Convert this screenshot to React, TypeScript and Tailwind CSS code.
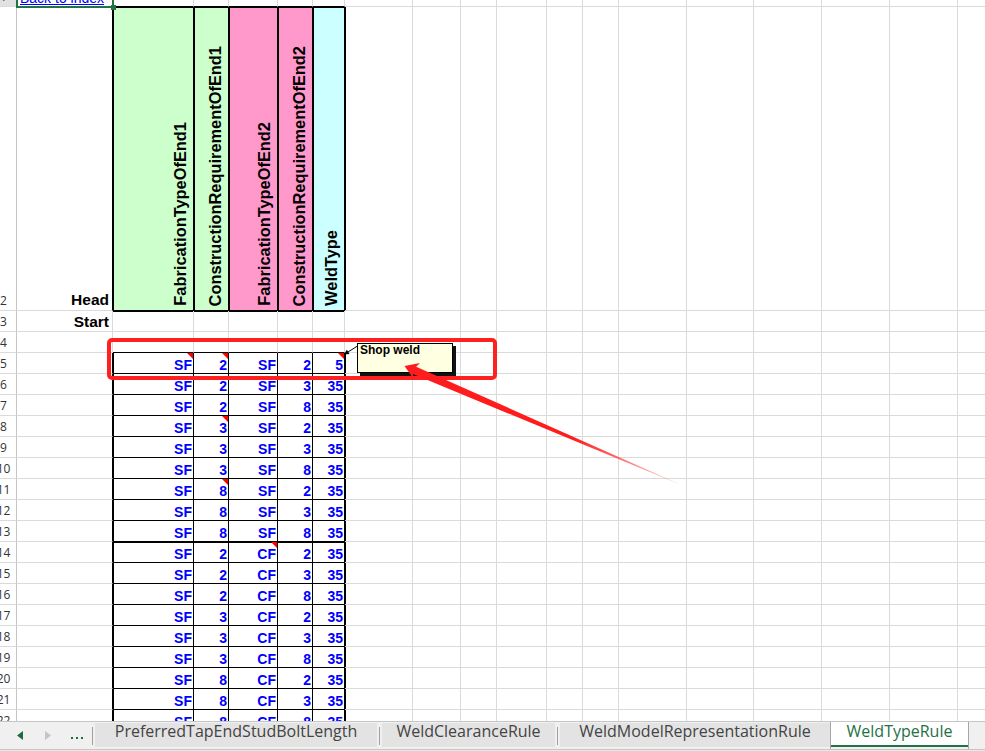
import React from 'react';

const W = [
  'w-[96px]', 'w-[81px]', 'w-[35px]', 'w-[49px]', 'w-[35px]', 'w-[32px]',
  'w-[68px]', 'w-[48px]', 'w-[36px]', 'w-[50px]', 'w-[36px]', 'w-[36px]',
  'w-[68px]', 'w-[67px]', 'w-[68px]', 'w-[68px]', 'w-[68px]', 'w-[68px]',
];

const DATA: Record<number, string[]> = {
  5: ['SF', '2', 'SF', '2', '5'],
  6: ['SF', '2', 'SF', '3', '35'],
  7: ['SF', '2', 'SF', '8', '35'],
  8: ['SF', '3', 'SF', '2', '35'],
  9: ['SF', '3', 'SF', '3', '35'],
  10: ['SF', '3', 'SF', '8', '35'],
  11: ['SF', '8', 'SF', '2', '35'],
  12: ['SF', '8', 'SF', '3', '35'],
  13: ['SF', '8', 'SF', '8', '35'],
  14: ['SF', '2', 'CF', '2', '35'],
  15: ['SF', '2', 'CF', '3', '35'],
  16: ['SF', '2', 'CF', '8', '35'],
  17: ['SF', '3', 'CF', '2', '35'],
  18: ['SF', '3', 'CF', '3', '35'],
  19: ['SF', '3', 'CF', '8', '35'],
  20: ['SF', '8', 'CF', '2', '35'],
  21: ['SF', '8', 'CF', '3', '35'],
  22: ['SF', '8', 'CF', '8', '35'],
};

const NOTES = new Set(['5-1', '5-2', '5-5', '8-2', '11-2', '14-3']);

const HEADERS = [
  'FabricationTypeOfEnd1',
  'ConstructionRequirementOfEnd1',
  'FabricationTypeOfEnd2',
  'ConstructionRequirementOfEnd2',
  'WeldType',
];

const HEADER_BG = ['', 'bg-[#ccffcc]', 'bg-[#ccffcc]', 'bg-[#ff99cc]', 'bg-[#ff99cc]', 'bg-[#ccffff]'];

function borderClasses(r: number, c: number) {
  const inTbl = c >= 1 && c <= 5;
  const isData = r >= 5 && r <= 22;
  const rBlack = (r === 2 || isData) && c <= 5;
  const bBlack = inTbl && (r === 1 || r === 2 || r === 4 || isData);
  const lExtra = (r === 2 && c >= 1 && c <= 6) || (isData && (c === 1 || c === 6));
  const tExtra = inTbl && (r === 2 || r === 3 || r === 14);
  const R = rBlack ? 'border-r-black' : 'border-r-[#dadada]';
  const B = bBlack ? 'border-b-black' : 'border-b-[#dadada]';
  const S =
    lExtra && tExtra
      ? 'shadow-[inset_1px_0_0_#000,inset_0_1px_0_#000]'
      : lExtra
      ? 'shadow-[inset_1px_0_0_#000]'
      : tExtra
      ? 'shadow-[inset_0_1px_0_#000]'
      : '';
  return `border-r border-b ${R} ${B} ${S}`;
}

function Cell({ r, c }: { r: number; c: number }) {
  const base = `relative shrink-0 h-full ${W[c]} ${borderClasses(r, c)}`;
  const note = NOTES.has(`${r}-${c}`) ? (
    <span className="absolute top-0 right-0 w-0 h-0 border-l-[6px] border-t-[6px] border-l-transparent border-t-[#ff0000]" />
  ) : null;

  if (r === 1 && c === 0) {
    return (
      <div className={`${base} overflow-hidden`}>
        <span className="block pl-[3px] -mt-[9px] text-[14px] leading-none text-[#0000ff] underline whitespace-nowrap">
          Back to index
        </span>
      </div>
    );
  }
  if ((r === 2 || r === 3) && c === 0) {
    return (
      <div className={`${base} flex items-end justify-end pr-[3px] ${r === 2 ? 'pb-[3px]' : 'pb-[2px]'}`}>
        <span className="text-[15.5px] leading-none font-bold text-black whitespace-nowrap">
          {r === 2 ? 'Head' : 'Start'}
        </span>
      </div>
    );
  }
  if (r === 2 && c >= 1 && c <= 5) {
    return (
      <div className={`${base} ${HEADER_BG[c]} flex items-end justify-end pr-[5px] pb-[4px]`}>
        <span className="[writing-mode:vertical-rl] rotate-180 whitespace-nowrap text-[16.4px] leading-none font-bold text-black">
          {HEADERS[c - 1]}
        </span>
      </div>
    );
  }
  if (DATA[r] && c >= 1 && c <= 5) {
    return (
      <div className={`${base} flex items-end justify-end pr-[1px] pb-[1px]`}>
        <span className="text-[14px] leading-none font-bold text-[#0000ff]">{DATA[r][c - 1]}</span>
        {note}
      </div>
    );
  }
  return <div className={base} />;
}

function RowHeader({ r }: { r: number }) {
  return (
    <div
      className={`w-[17px] h-full shrink-0 overflow-hidden flex items-end border-r border-b border-r-[#c6c6c6] border-b-[#dadada] ${
        r === 1 ? 'bg-[#e1e1e1]' : 'bg-white'
      }`}
    >
      <div className="-ml-[10px] w-[27px] shrink-0 text-center text-[12px] leading-none pb-[3px] text-[#333] font-[family-name:Open_Sans,sans-serif]">
        {r}
      </div>
    </div>
  );
}

function SheetRow({ r }: { r: number }) {
  const h = r === 1 ? 'h-[7px]' : r === 2 ? 'h-[304px]' : 'h-[21px]';
  return (
    <div className={`flex ${h} shrink-0`}>
      <RowHeader r={r} />
      {W.map((_, c) => (
        <Cell key={c} r={r} c={c} />
      ))}
    </div>
  );
}

function Tab({ w, label }: { w: string; label: string }) {
  return (
    <div
      className={`${w} shrink-0 mt-[1px] h-[24px] bg-[#e3e3e3] flex items-start justify-center text-[16px] leading-none text-[#444] whitespace-nowrap`}
    >
      {label}
    </div>
  );
}

function Sep() {
  return <div className="w-px h-[18px] self-center ml-[2px] bg-[#a0a0a0] shrink-0" />;
}

function TabBar() {
  return (
    <div className="h-[30px] flex flex-col bg-[#f0f0f0] font-[family-name:Open_Sans,sans-serif]">
      <div className="h-px shrink-0 bg-[#c6c6c6]" />
      <div className="h-[27px] shrink-0 flex">
        <div className="w-[92px] shrink-0 flex items-center">
          <svg className="ml-[17px] shrink-0" width="6" height="9" viewBox="0 0 6 9">
            <path d="M6 0 L0 4.5 L6 9 Z" fill="#1d6b40" />
          </svg>
          <svg className="ml-[22px] shrink-0" width="6" height="9" viewBox="0 0 6 9">
            <path d="M0 0 L6 4.5 L0 9 Z" fill="#c4c4c4" />
          </svg>
          <svg className="ml-[20px] mt-[5px] shrink-0" width="12" height="2" viewBox="0 0 12 2">
            <rect x="0" y="0" width="2" height="2" fill="#1d6b40" />
            <rect x="5" y="0" width="2" height="2" fill="#1d6b40" />
            <rect x="10" y="0" width="2" height="2" fill="#1d6b40" />
          </svg>
        </div>
        <div className="w-px h-[18px] self-center bg-[#a0a0a0] shrink-0" />
        <div className="ml-[2px] flex">
          <Tab w="w-[282px]" label="PreferredTapEndStudBoltLength" />
        </div>
        <Sep />
        <div className="ml-[2px] flex">
          <Tab w="w-[173px]" label="WeldClearanceRule" />
        </div>
        <Sep />
        <div className="ml-[2px] flex">
          <Tab w="w-[270px]" label="WeldModelRepresentationRule" />
        </div>
        <div className="w-[139px] shrink-0 h-[27px] flex flex-col border-l border-r border-[#a6a6a6]">
          <div className="h-[23px] bg-white flex items-start justify-center pt-[1px] text-[16px] leading-none text-[#1e7145] whitespace-nowrap">
            WeldTypeRule
          </div>
          <div className="h-[2px] bg-[#217346]" />
        </div>
      </div>
      <div className="h-px shrink-0 bg-[#c6c6c6]" />
      <div className="h-px shrink-0 bg-[#e8e8e8]" />
    </div>
  );
}

function Overlays() {
  return (
    <>
      {/* selection of A1 */}
      <div className="absolute left-[16px] -top-[10px] w-[98px] h-[18px] border-2 border-[#217346] pointer-events-none" />
      <div className="absolute left-[111px] top-[5px] w-[5px] h-[5px] bg-[#217346]" />

      {/* comment connector */}
      <svg className="absolute left-0 top-0 pointer-events-none" width="985" height="751">
        <line x1="357.5" y1="346" x2="348" y2="352" stroke="#000" strokeWidth="1" />
        <polygon points="344,354.5 349.6,353.9 346.8,349.7" fill="#000" />
      </svg>

      {/* comment box */}
      <div className="absolute left-[357px] top-[343px] w-[96px] h-[30px] bg-[#ffffe1] border border-black shadow-[3px_3px_0_#111] pl-[2px]">
        <span className="block text-[12px] leading-none font-bold text-black whitespace-nowrap">Shop weld</span>
      </div>

      {/* red annotation box */}
      <div className="absolute left-[107px] top-[338px] w-[390px] h-[42px] border-4 border-[#ff2020] rounded-[5px] pointer-events-none" />

      {/* red arrow */}
      <svg className="absolute left-0 top-0 pointer-events-none" width="985" height="751">
        <defs>
          <linearGradient id="ag" gradientUnits="userSpaceOnUse" x1="404" y1="366" x2="686" y2="487">
            <stop offset="0" stopColor="#ff1c1c" stopOpacity="1" />
            <stop offset="0.6" stopColor="#ff1c1c" stopOpacity="1" />
            <stop offset="1" stopColor="#ff1c1c" stopOpacity="0.12" />
          </linearGradient>
        </defs>
        <polygon
          points="404.5,366 420,362.9 416.2,366.7 686,487 413,374 413.3,378.5"
          fill="url(#ag)"
        />
      </svg>
    </>
  );
}

export default function App() {
  const rows = Array.from({ length: 22 }, (_, i) => i + 1);
  return (
    <div className="relative w-[985px] h-[751px] overflow-hidden bg-white font-[family-name:Liberation_Sans,Arial,sans-serif]">
      <div className="h-[721px] overflow-hidden">
        {rows.map((r) => (
          <SheetRow key={r} r={r} />
        ))}
      </div>
      <TabBar />
      <Overlays />
    </div>
  );
}
